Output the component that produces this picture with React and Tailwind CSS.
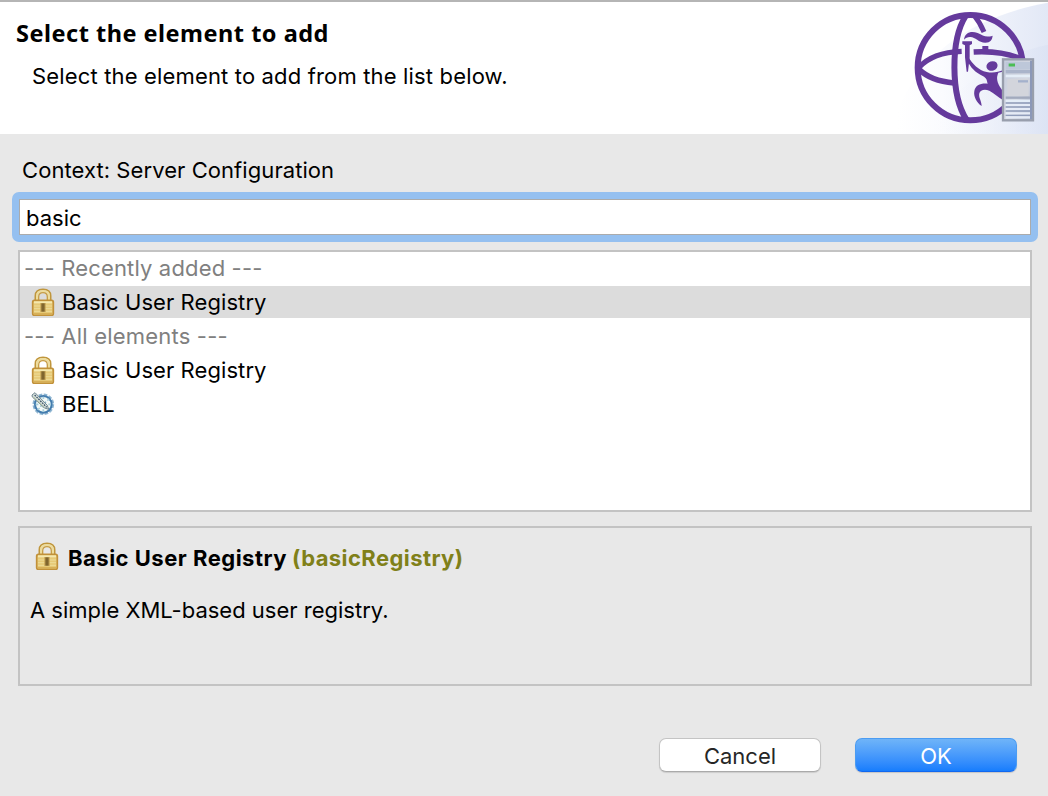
import React from "react";

function LockIcon({ className }) {
  return (
    <svg className={className} width="24" height="28" viewBox="0 0 72 84" fill="none">
      <path d="M13 38V24C13 10 23 4 36 4s23 6 23 20v14" stroke="#c0963c" strokeWidth="5" />
      <path d="M18 38V25C18 14 26 9 36 9s18 5 18 16v13" stroke="#eddc9c" strokeWidth="6" />
      <path d="M23 38V27c0-9 6-13 13-13s13 4 13 13v11" stroke="#c89e46" strokeWidth="4" />
      <rect x="5" y="37" width="62" height="45" rx="5" fill="#e6c976" stroke="#c1913a" strokeWidth="5" />
      <path d="M9 43h54" stroke="#f5e8ae" strokeWidth="6" />
      <path d="M9 54h54M9 62h54M9 70h54" stroke="#eedc98" strokeWidth="3" />
      <path d="M9 77h54" stroke="#d8b058" strokeWidth="4" />
      <rect x="27" y="45" width="18" height="27" fill="#c3a050" opacity=".65" />
      <rect x="31" y="46" width="10" height="25" fill="#80652d" />
    </svg>
  );
}

function GearIcon({ className }) {
  return (
    <svg className={className} width="24" height="24" viewBox="0 0 72 72" fill="none">
      <circle cx="37" cy="37" r="29" stroke="#8fb6d2" strokeWidth="7" strokeDasharray="11 4.2" />
      <circle cx="37" cy="37" r="25" fill="#f4faf7" stroke="#437cae" strokeWidth="6" />
      <path d="M37 14v7M54 20l-5 6M60 37h-8M14 37h8M20 54l6-6M37 60v-8" stroke="#a8cfdc" strokeWidth="5" />
      <path d="M45 29l-5 5M28 43l5-3M37 47v-6" stroke="#7fabc5" strokeWidth="4" />
      <path d="M3 9l9-7 37 38 4 12-12-4L4 15z" fill="#d7e0de" stroke="#70868f" strokeWidth="3" />
      <path d="M11 9l36 37" stroke="#3f5767" strokeWidth="4" strokeDasharray="5 3" />
      <path d="M7 14l33 33" stroke="#b7c39d" strokeWidth="3" />
    </svg>
  );
}

function Banner() {
  return (
    <svg className="block shrink-0" width="150" height="132" viewBox="0 6 450 396" fill="none">
      <defs>
        <linearGradient id="sky" x1="0" y1="0" x2="1" y2="0">
          <stop offset="0" stopColor="#ffffff" />
          <stop offset="0.3" stopColor="#fafbfe" />
          <stop offset="1" stopColor="#e2e8f6" />
        </linearGradient>
        <linearGradient id="sky2" x1="0" y1="0" x2="1" y2="0">
          <stop offset="0" stopColor="#ffffff" stopOpacity="0" />
          <stop offset="1" stopColor="#d9e1f3" />
        </linearGradient>
        <linearGradient id="tower" x1="0" y1="0" x2="1" y2="1">
          <stop offset="0" stopColor="#c5cddd" />
          <stop offset="0.55" stopColor="#d5d8e2" />
          <stop offset="1" stopColor="#a8b2cb" />
        </linearGradient>
      </defs>
      <path d="M0 402V330C80 130 270 40 450 8V402z" fill="url(#sky)" />
      <path d="M60 402C180 250 320 160 450 134V402z" fill="url(#sky2)" opacity=".65" />
      <g stroke="#653a9c">
        <circle cx="217" cy="203" r="158" strokeWidth="18" />
        <path d="M203 48C158 118 157 285 206 360" strokeWidth="18" />
        <path d="M62 203C90 172 132 156 191 154" strokeWidth="16" />
        <path d="M62 207C88 233 123 245 168 249" strokeWidth="17" />
        <path d="M227 156C286 153 334 159 376 181" strokeWidth="17" />
        <path d="M229 47c10 12 20 28 29 49" strokeWidth="15" />
      </g>
      <g fill="#653a9c">
        <path d="M198 119C200 98 219 91 239 99c17 8 24 15 45 8-2 13-6 20-22 21-21 0-30-18-46-17-8 0-13 3-18 8z" />
        <path d="M253 138h18v17h-18z" />
        <path d="M193 124h29v8l-7 4v36l-5 43h-4l-5-43v-36l-8-4z" />
        <path d="M211 170c12 22 31 40 55 46 20 4 35 0 50-6v91c-15-9-27-21-42-29-15-5-27-2-30 8-3 13 6 21 7 38-15-10-25-28-22-45 3-17 19-24 40-22-3-11-2-16-15-23-22-10-37-26-45-44z" />
        <ellipse cx="282" cy="198" rx="17" ry="14" transform="rotate(-18 282 198)" />
      </g>
      <path d="M301 218c-6 13-7 28 13 54v-57z" fill="#eaf0fa" />
      <rect x="315" y="178" width="90" height="183" fill="url(#tower)" stroke="#989eac" strokeWidth="7" />
      <path d="M399 182v176" stroke="#8c98b8" strokeWidth="6" />
      <rect x="323" y="186" width="73" height="23" fill="#bdc7d9" />
      <path d="M332 195h19" stroke="#4bbd54" strokeWidth="9" />
      <path d="M323 215h73" stroke="#aab4ca" strokeWidth="10" />
      <path d="M323 228h73M323 303h73" stroke="#e4edf7" strokeWidth="8" />
      <rect x="328" y="237" width="64" height="51" fill="#d3d5dc" />
      <path d="M360 244h30" stroke="#a4b1cc" strokeWidth="7" />
      <path d="M323 293h73" stroke="#a2aabd" strokeWidth="7" />
      <path d="M323 315h73M323 327h73M323 340h73M323 352h73" stroke="#e5ebf6" strokeWidth="7" />
      <path d="M323 309h73M323 321h73M323 333h73M323 346h73" stroke="#909dbb" strokeWidth="4" />
    </svg>
  );
}

export default function App() {
  return (
    <div className="flex h-[796px] w-[1048px] flex-col overflow-hidden whitespace-nowrap bg-[#e8e8e8] font-['Inter',sans-serif] text-[22px] leading-[34px] text-black">
      <header className="flex h-[134px] shrink-0 justify-between border-t-2 border-[#b5b5b5] bg-white">
        <div className="flex flex-col pl-4 pt-[14px]">
          <h1 className="font-['Noto_Sans',sans-serif] text-[23.5px] font-bold leading-[34px] tracking-[0.5px]"><span>Select the element to add</span></h1>
          <p className="pl-4 pt-[9px] tracking-[0.16px]"><span>Select the element to add from the list below.</span></p>
        </div>
        <Banner />
      </header>

      <main className="flex flex-col pl-[18px] pr-4 pt-[19px]">
        <label htmlFor="filter" className="pl-1 tracking-[0.07px]"><span>Context: Server Configuration</span></label>
        <div className="-mx-[6px] mt-[5px] flex h-[50px] rounded-[7px] bg-[#95c0f0] p-[7px]">
          <input
            id="filter"
            defaultValue="basic"
            className="w-full border border-[#ababab] bg-white px-[6px] pt-[2px] text-[22px] leading-[34px] outline-none"
          />
        </div>

        <ul className="mt-2 flex h-[262px] flex-col border-2 border-[#c3c3c3] bg-white tracking-[0.08px]">
          <li className="h-[34px] pl-1 leading-8 tracking-[0.16px] text-[#808080]"><span>--- Recently added ---</span></li>
          <li className="flex h-8 items-center bg-[#dcdcdc] pl-[11px]">
            <LockIcon className="mr-[7px]" /><span>Basic User Registry</span>
          </li>
          <li className="h-[34px] pl-1 pt-[1px] tracking-[0.2px] text-[#808080]"><span>--- All elements ---</span></li>
          <li className="flex h-[34px] items-center pl-[11px] pt-[2px]">
            <LockIcon className="mr-[7px]" /><span>Basic User Registry</span>
          </li>
          <li className="flex h-[34px] items-center pl-[11px] pt-[2px]">
            <GearIcon className="mr-[7px]" /><span>BELL</span>
          </li>
        </ul>

        <section className="mt-[14px] flex h-[160px] flex-col border-2 border-[#c3c3c3] pl-[10px] pt-[13px]">
          <h2 className="flex items-center font-bold tracking-[0.5px]">
            <LockIcon className="mb-1 ml-[5px] mr-[9px]" />
            <span>Basic User Registry</span>
            <span className="ml-[5px] tracking-[0.42px] text-[#808019]">(basicRegistry)</span>
          </h2>
          <p className="mt-[18px]"><span>A simple XML-based user registry.</span></p>
        </section>
      </main>

      <footer className="mt-[52px] flex justify-end gap-[34px] pr-[31px]">
        <button className="h-[34px] w-[162px] rounded-[7px] border border-[#c4c4c4] border-b-[#aaaaaa] bg-white pt-[1px] leading-8 text-[#262626] shadow-[0_1px_1px_rgba(0,0,0,0.12)]"><span>Cancel</span></button>
        <button className="h-[34px] w-[162px] rounded-[7px] border border-[#4b9cf2] border-b-[#1168f0] bg-linear-to-b from-[#6fb4f8] to-[#167dfd] pt-[1px] leading-8 text-white shadow-[0_1px_1px_rgba(0,0,0,0.15)]"><span>OK</span></button>
      </footer>
    </div>
  );
}
